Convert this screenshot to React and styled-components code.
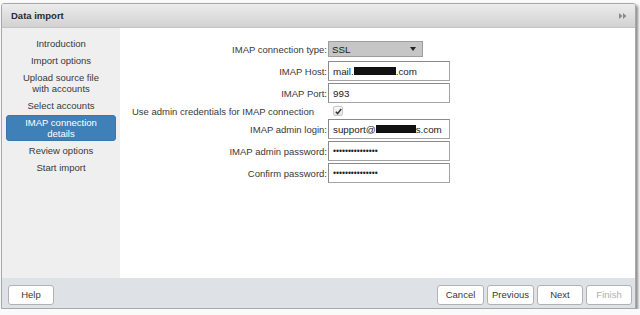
import React from "react";
import styled, { createGlobalStyle } from "styled-components";

const GlobalStyle = createGlobalStyle`
  html, body {
    margin: 0;
    padding: 0;
    background: #fafafa;
  }
  body {
    font-family: "Liberation Sans", Arial, sans-serif;
    font-size: 9.5px;
    color: #383838;
  }
`;

const Window = styled.div`
  margin: 3px 4px 0 1px;
  width: 635px;
  height: 306px;
  display: flex;
  flex-direction: column;
  border: 1px solid #a8a8a8;
  border-radius: 3px 3px 0 0;
  box-sizing: border-box;
  background: #fff;
  box-shadow: 2px 2px 3px rgba(0, 0, 0, 0.45);
  overflow: hidden;
`;

const TitleBar = styled.div`
  height: 23px;
  flex: none;
  display: flex;
  align-items: center;
  justify-content: space-between;
  padding: 0 8px 0 9px;
  background: linear-gradient(#ececec, #d2d2d2);
  border-bottom: 1px solid #c4c4c4;
  color: #2a2a2a;
  font-size: 9.5px;
  font-weight: bold;
`;

const Main = styled.div`
  flex: 1;
  display: flex;
  min-height: 0;
`;

const Sidebar = styled.nav`
  width: 118px;
  flex: none;
  background: #efefef;
  padding: 8px 4px 0;
  box-sizing: border-box;
  display: flex;
  flex-direction: column;
  gap: 2px;
`;

const Step = styled.div`
  padding: ${(p) => (p.$active ? "1px 4px" : "2px 4px")};
  line-height: 11px;
  text-align: center;
  border-radius: 3px;
  color: ${(p) => (p.$active ? "#fff" : "#383838")};
  background: ${(p) => (p.$active ? "#3f80b9" : "transparent")};
  border: ${(p) => (p.$active ? "1px solid #3a76aa" : "none")};
`;

const Content = styled.div`
  flex: 1;
  padding-top: 10px;
  display: flex;
  flex-direction: column;
`;

const Row = styled.div`
  display: grid;
  grid-template-columns: 208px 1fr;
  align-items: center;
  height: ${(p) => p.$h || 22}px;
`;

const Label = styled.label`
  text-align: right;
  white-space: nowrap;
  padding-right: 1px;
`;

const WideLabel = styled.label`
  padding-left: 12px;
  white-space: nowrap;
`;

const Input = styled.div`
  width: 122px;
  height: 20px;
  box-sizing: border-box;
  border: 1px solid #a4a4a4;
  border-top-color: #8a8a8a;
  border-left-color: #8a8a8a;
  background: #fff;
  padding: 0 4px;
  display: flex;
  align-items: center;
  color: #222;
  font-size: 9.8px;
  white-space: nowrap;
  overflow: hidden;
`;

const Redact = styled.span`
  display: inline-block;
  width: ${(p) => p.$w}px;
  height: 8px;
  background: #111;
`;

const Dots = styled.span`
  font-size: 8.5px;
  letter-spacing: 0;
  color: #222;
`;

const Select = styled.div`
  width: 95px;
  height: 16px;
  box-sizing: border-box;
  border: 1px solid #9e9e9e;
  background: #c6c6c6;
  display: flex;
  align-items: center;
  justify-content: space-between;
  padding: 0 6px 0 3px;
  color: #222;
  font-size: 9.8px;
`;

const Arrow = styled.span`
  width: 0;
  height: 0;
  border-left: 3px solid transparent;
  border-right: 3px solid transparent;
  border-top: 4px solid #222;
`;

const Check = styled.span`
  margin-left: 5px;
  width: 10px;
  height: 10px;
  box-sizing: border-box;
  border: 1px solid #c8c8c8;
  border-radius: 2px;
  background: linear-gradient(#fafafa, #e4e4e4);
  display: flex;
  align-items: center;
  justify-content: center;
`;

const Footer = styled.div`
  height: 30px;
  flex: none;
  background: #dee2e7;
  display: flex;
  align-items: center;
  justify-content: space-between;
  padding: 0 3px 0 6px;
`;

const ButtonGroup = styled.div`
  display: flex;
  gap: 3px;
`;

const Button = styled.button`
  width: ${(p) => p.$w || 46}px;
  height: 20px;
  box-sizing: border-box;
  border: 1px solid #b2b2b2;
  border-radius: 3px;
  background: #fff;
  font-family: "Liberation Sans", Arial, sans-serif;
  font-size: 9.5px;
  color: ${(p) => (p.disabled ? "#b0b0b0" : "#383838")};
  padding: 0;
  margin-top: 3px;
`;

const steps = [
  ["Introduction"],
  ["Import options"],
  ["Upload source file", "with accounts"],
  ["Select accounts"],
  ["IMAP connection", "details"],
  ["Review options"],
  ["Start import"],
];

export default function App() {
  return (
    <>
      <GlobalStyle />
      <Window>
        <TitleBar>
          <span>Data import</span>
          <svg width="8" height="6" viewBox="0 0 8 6">
            <path d="M0 0 L3.5 3 L0 6Z M4 0 L7.5 3 L4 6Z" fill="#8a8a8a" />
          </svg>
        </TitleBar>
        <Main>
          <Sidebar>
            {steps.map((lines, i) => (
              <Step key={i} $active={i === 4}>
                {lines.map((l) => (
                  <div key={l}>{l}</div>
                ))}
              </Step>
            ))}
          </Sidebar>
          <Content>
            <Row>
              <Label>IMAP connection type:</Label>
              <Select>
                <span>SSL</span>
                <Arrow />
              </Select>
            </Row>
            <Row>
              <Label>IMAP Host:</Label>
              <Input>
                mail.
                <Redact $w={42} />
                .com
              </Input>
            </Row>
            <Row>
              <Label>IMAP Port:</Label>
              <Input>993</Input>
            </Row>
            <Row $h={14}>
              <WideLabel>Use admin credentials for IMAP connection</WideLabel>
              <Check>
                <svg width="7" height="7" viewBox="0 0 7 7">
                  <path d="M0.8 3.8 L2.6 5.6 L6.2 1" stroke="#333" strokeWidth="1.4" fill="none" />
                </svg>
              </Check>
            </Row>
            <Row>
              <Label>IMAP admin login:</Label>
              <Input>
                support@
                <Redact $w={40} />
                s.com
              </Input>
            </Row>
            <Row>
              <Label>IMAP admin password:</Label>
              <Input>
                <Dots>•••••••••••••••</Dots>
              </Input>
            </Row>
            <Row>
              <Label>Confirm password:</Label>
              <Input>
                <Dots>•••••••••••••••</Dots>
              </Input>
            </Row>
          </Content>
        </Main>
        <Footer>
          <Button $w={46}>Help</Button>
          <ButtonGroup>
            <Button $w={47}>Cancel</Button>
            <Button $w={47}>Previous</Button>
            <Button $w={46}>Next</Button>
            <Button $w={46} disabled>
              Finish
            </Button>
          </ButtonGroup>
        </Footer>
      </Window>
    </>
  );
}
